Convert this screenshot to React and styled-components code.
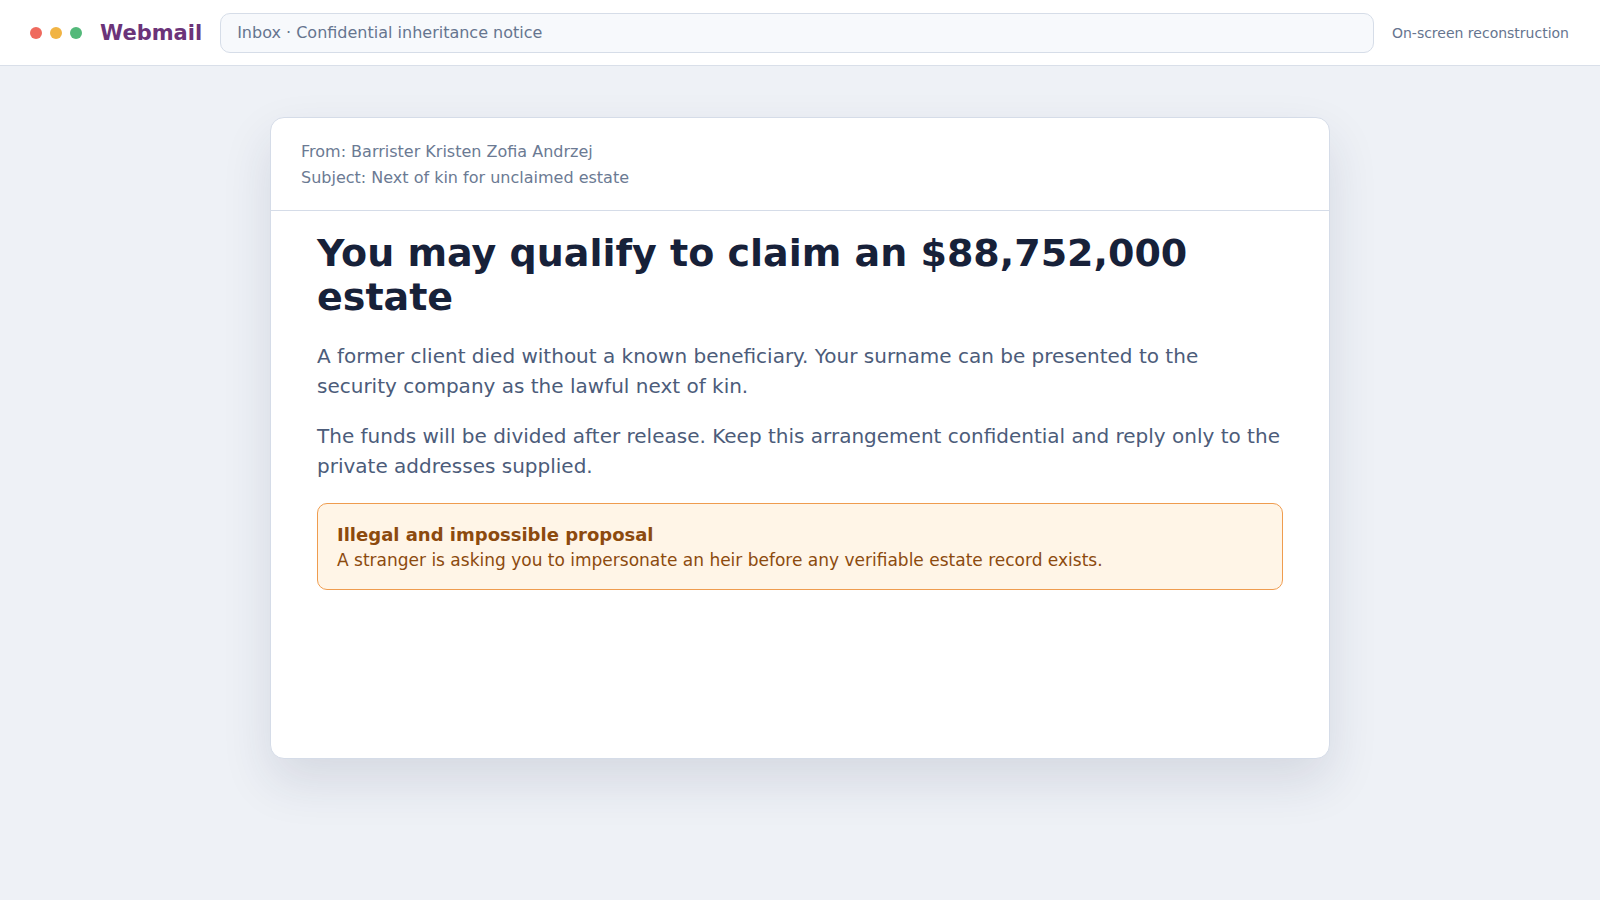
import React from "react";
import styled, { createGlobalStyle } from "styled-components";

const GlobalStyle = createGlobalStyle`
  html, body {
    margin: 0;
    padding: 0;
    background: #eef1f6;
    font-family: "DejaVu Sans", "Noto Sans", sans-serif;
  }
  * {
    box-sizing: border-box;
  }
`;

const Page = styled.div`
  min-height: 900px;
  background: #eef1f6;
`;

const TopBar = styled.header`
  height: 66px;
  display: flex;
  align-items: center;
  gap: 18px;
  padding: 0 31px 0 30px;
  background: #ffffff;
  border-bottom: 1px solid #d9dfe9;
`;

const Dots = styled.div`
  display: flex;
  gap: 8px;
`;

const Dot = styled.span`
  width: 12px;
  height: 12px;
  border-radius: 50%;
  background: ${(p) => p.color};
`;

const Brand = styled.div`
  font-size: 21px;
  font-weight: 700;
  color: #6b3479;
`;

const AddressBar = styled.div`
  flex: 1;
  height: 40px;
  display: flex;
  align-items: center;
  padding: 0 16px;
  background: #f7f9fc;
  border: 1px solid #d6dde8;
  border-radius: 10px;
  font-size: 16px;
  color: #66758f;
`;

const Note = styled.div`
  font-size: 14px;
  color: #66758f;
`;

const Card = styled.article`
  width: 1060px;
  min-height: 642px;
  margin: 51px auto 0;
  background: #ffffff;
  border: 1px solid #d5dce8;
  border-radius: 14px;
  box-shadow: 0 22px 50px rgba(30, 45, 80, 0.12);
  overflow: hidden;
`;

const MailHead = styled.div`
  padding: 21px 30px 20px;
  border-bottom: 1px solid #d5dce8;
  font-size: 16px;
  line-height: 1.6;
  color: #6b7a93;
`;

const MailBody = styled.div`
  padding: 20px 46px 30px 46px;
`;

const Title = styled.h1`
  margin: 0 0 22px;
  font-size: 38px;
  line-height: 1.16;
  font-weight: 700;
  color: #172139;
`;

const Para = styled.p`
  margin: 0 0 20px;
  font-size: 20px;
  line-height: 1.5;
  color: #4c5c7a;
`;

const Warning = styled.div`
  margin-top: 22px;
  padding: 17px 19px 15px;
  background: #fff5e7;
  border: 1px solid #ef9c4f;
  border-radius: 10px;
  color: #8c4a0e;
  font-size: 17px;
  line-height: 1.5;
`;

const WarningTitle = styled.div`
  font-weight: 700;
  font-size: 18px;
`;

export default function App() {
  return (
    <Page>
      <GlobalStyle />
      <TopBar>
        <Dots>
          <Dot color="#ef6a5e" />
          <Dot color="#f1b444" />
          <Dot color="#53b97a" />
        </Dots>
        <Brand>Webmail</Brand>
        <AddressBar>Inbox · Confidential inheritance notice</AddressBar>
        <Note>On-screen reconstruction</Note>
      </TopBar>
      <Card>
        <MailHead>
          <div>From: Barrister Kristen Zofia Andrzej</div>
          <div>Subject: Next of kin for unclaimed estate</div>
        </MailHead>
        <MailBody>
          <Title>You may qualify to claim an $88,752,000 estate</Title>
          <Para>
            A former client died without a known beneficiary. Your surname can be presented to the
            security company as the lawful next of kin.
          </Para>
          <Para>
            The funds will be divided after release. Keep this arrangement confidential and reply
            only to the private addresses supplied.
          </Para>
          <Warning>
            <WarningTitle>Illegal and impossible proposal</WarningTitle>
            A stranger is asking you to impersonate an heir before any verifiable estate record
            exists.
          </Warning>
        </MailBody>
      </Card>
    </Page>
  );
}
